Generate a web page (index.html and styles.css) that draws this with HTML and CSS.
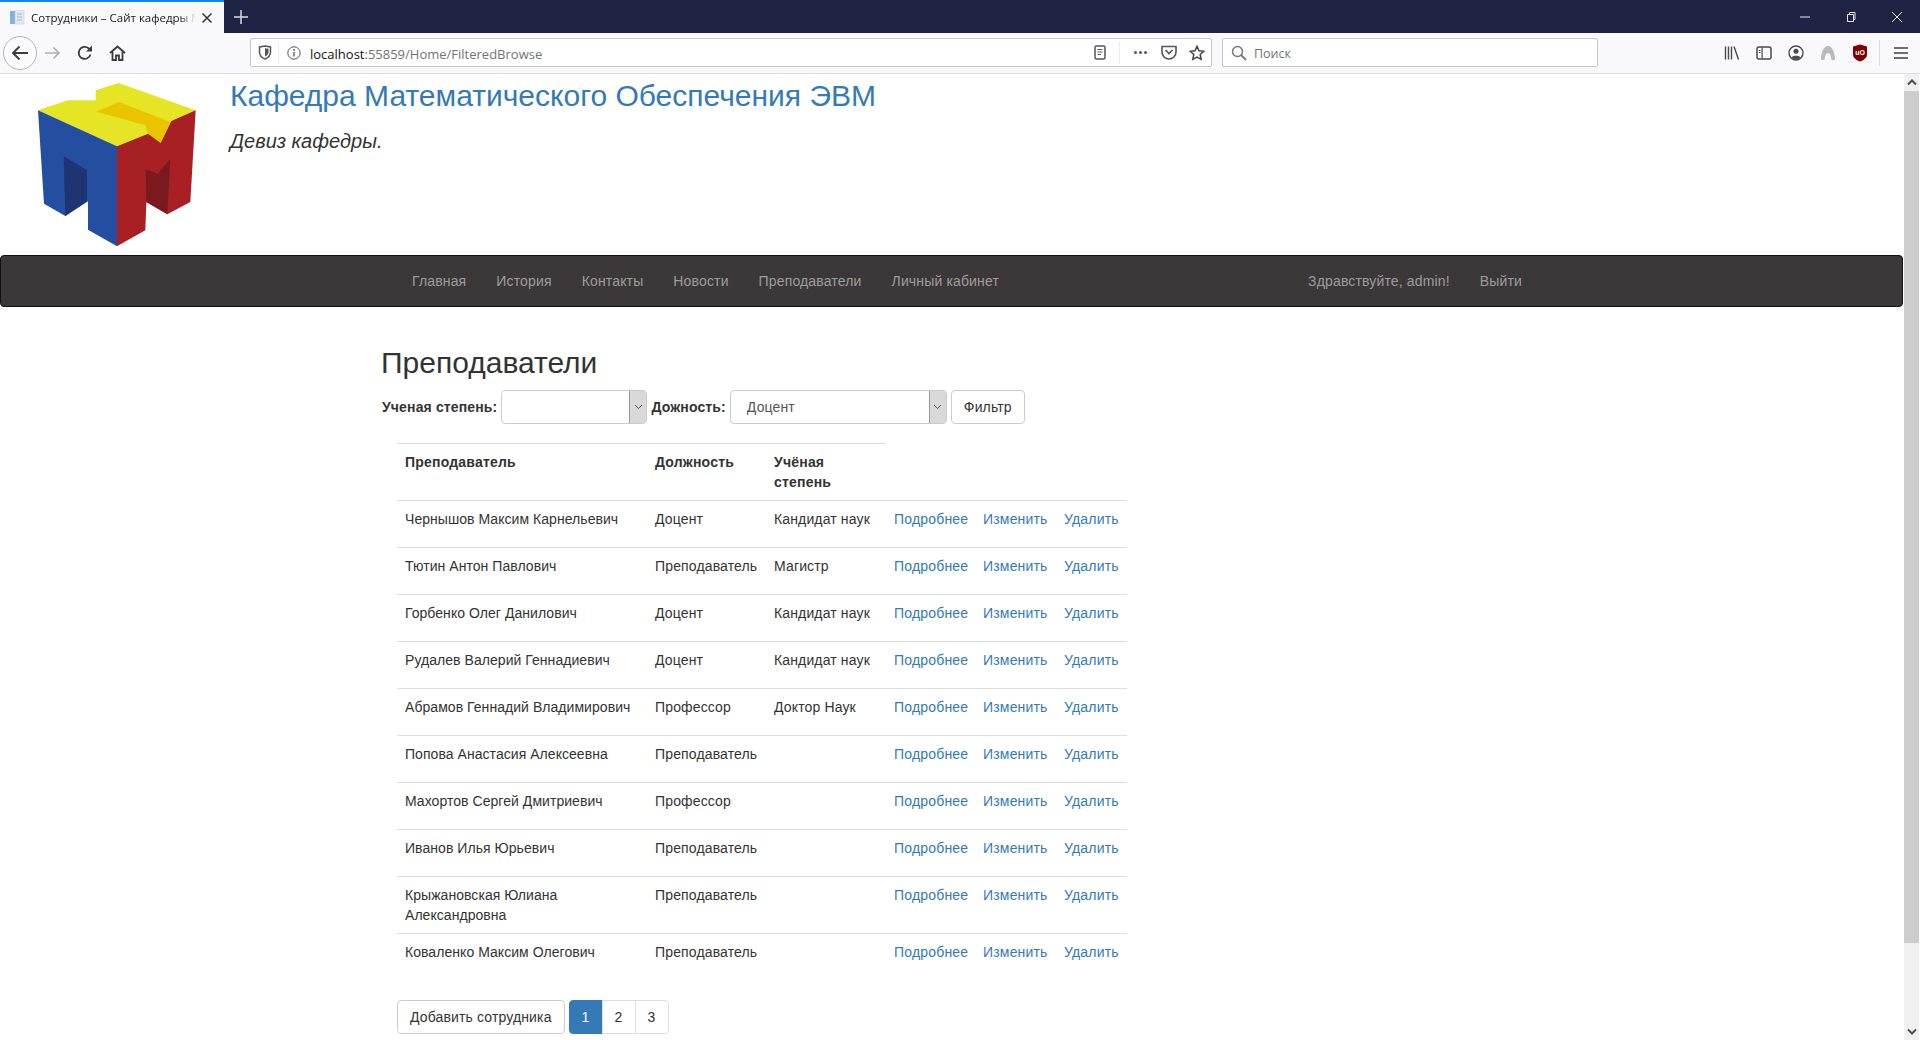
FILE: index.html
```html
<!DOCTYPE html>
<html lang="ru">
<head>
<meta charset="utf-8">
<title>Сотрудники – Сайт кафедры МО ЭВМ</title>
<link rel="stylesheet" href="styles.css">
</head>
<body>
<div class="tabbar">
  <div class="tab">
    <svg class="favicon" width="15" height="15" viewBox="0 0 15 15"><rect x="0" y="1" width="5" height="13" fill="#7fb2dc"/><rect x="5" y="0" width="9" height="14" fill="#e4e8ee" stroke="#c3cbd6" stroke-width=".6"/><path d="M7 4h5M7 7h5M7 10h5" stroke="#aab4c2" stroke-width="1"/></svg>
    <span class="tab-title">Сотрудники – Сайт кафедры М</span>
    <svg class="tab-close" width="12" height="12" viewBox="0 0 12 12"><path d="M1.500 1.500l9 9M10.500 1.500l-9 9" stroke="#33343a" stroke-width="1.500" fill="none"/></svg>
  </div>
  <svg class="newtab" width="14" height="14" viewBox="0 0 14 14"><path d="M7 0v14M0 7h14" stroke="#d8dae2" stroke-width="1.500"/></svg>
  <div class="winctl">
    <svg width="12" height="12" viewBox="0 0 12 12"><path d="M1 6h10" stroke="#e8e9ee" stroke-width="1"/></svg>
    <svg width="12" height="12" viewBox="0 0 12 12"><path d="M2.500 3.500h6v7h-6zM4.500 3.500V1.500h5.500v7H8.500" stroke="#e8e9ee" stroke-width="1" fill="none"/></svg>
    <svg width="12" height="12" viewBox="0 0 12 12"><path d="M1 1l10 10M11 1L1 11" stroke="#e8e9ee" stroke-width="1" fill="none"/></svg>
  </div>
</div>
<div class="toolbar">
  <div class="nav-btns">
    <div class="back"><svg width="18" height="18" viewBox="0 0 18 18"><path d="M17 9H2M8.500 2.500L2 9l6.500 6.500" stroke="#3b3b40" stroke-width="1.900" fill="none"/></svg></div>
    <svg class="ic-fwd" width="16" height="16" viewBox="0 0 16 16"><path d="M0 8h14M8.500 2.500L14 8l-5.500 5.500" stroke="#aeaeb2" stroke-width="1.600" fill="none"/></svg>
    <svg class="ic-reload" width="16" height="16" viewBox="0 0 16 16"><path d="M13.500 9.500A6 6 0 1 1 11.500 3.200L14 5" stroke="#3b3b40" stroke-width="1.800" fill="none"/><path d="M15 0.500V6.500H9z" fill="#3b3b40"/></svg>
    <svg class="ic-home" width="17" height="16" viewBox="0 0 17 16"><path d="M1 8l7.500-6.500L16 8M3.500 6.500V15h3.500v-4.500h3V15h3.500V6.500" stroke="#3b3b40" stroke-width="1.800" fill="none"/></svg>
  </div>
  <div class="urlbar">
    <svg class="ic-shield" width="14" height="15" viewBox="0 0 14 15"><path d="M1.500 2l5.500-1 5.500 1v5c0 3.500-2.500 5.800-5.500 7-3-1.200-5.500-3.500-5.500-7z" stroke="#55555a" stroke-width="1.500" fill="none"/><path d="M7 3.200l3.500 .6v3.200c0 2-1.500 3.500-3.500 4.500z" fill="#55555a"/></svg>
    <span class="url-sep"></span>
    <svg class="ic-info" width="14" height="14" viewBox="0 0 14 14"><circle cx="7" cy="7" r="6.200" stroke="#55555a" stroke-width="1" fill="none"/><path d="M7 6v4.500" stroke="#55555a" stroke-width="1.300"/><circle cx="7" cy="3.900" r=".9" fill="#55555a"/></svg>
    <span class="url-text"><span class="url-host">localhost</span>:55859/Home/FilteredBrowse</span>
    <svg class="ic-reader" width="12" height="15" viewBox="0 0 12 15"><rect x="1" y="1" width="10" height="13" rx="1.500" stroke="#55555a" stroke-width="1.500" fill="none"/><path d="M3.500 4.500h5M3.500 7h5M3.500 9.500h3.500" stroke="#55555a" stroke-width="1"/></svg>
    <span class="url-sep url-sep-right"></span>
    <span class="ic-dots"><i></i><i></i><i></i></span>
    <svg class="ic-pocket" width="16" height="15" viewBox="0 0 16 15"><path d="M1 1.500h14v5.500a7 7 0 0 1-14 0z" stroke="#55555a" stroke-width="1.600" fill="none"/><path d="M4.500 5l3.500 3.500L11.500 5" stroke="#55555a" stroke-width="1.700" fill="none"/></svg>
    <svg class="ic-star" width="16" height="16" viewBox="0 0 16 16"><path d="M8 1.300l2 4.500 4.800.5-3.600 3.200 1 4.800L8 12l-4.200 2.300 1-4.800L1.200 6.300 6 5.800z" stroke="#45454a" stroke-width="1.500" fill="none"/></svg>
  </div>
  <div class="searchbar">
    <svg width="16" height="16" viewBox="0 0 16 16"><circle cx="6.500" cy="6.500" r="5" stroke="#77777c" stroke-width="1.500" fill="none"/><path d="M10 10l5 5" stroke="#77777c" stroke-width="1.800"/></svg>
    <span>Поиск</span>
  </div>
  <div class="tools">
    <svg width="16" height="16" viewBox="0 0 16 16"><path d="M1.500 1.500v13M4.500 1.500v13M7.500 1.500v13M10 1.500l4.500 13" stroke="#4a4a4f" stroke-width="1.400" fill="none"/></svg>
    <svg width="16" height="16" viewBox="0 0 16 16"><rect x="1" y="2" width="14" height="12" rx="2" stroke="#4a4a4f" stroke-width="1.500" fill="none"/><rect x="5.500" y="2.500" width="1.200" height="11" fill="#4a4a4f"/><path d="M2.800 5.500h1.700M2.800 7.500h1.700" stroke="#4a4a4f" stroke-width="1"/></svg>
    <svg width="16" height="16" viewBox="0 0 16 16"><circle cx="8" cy="8" r="7" stroke="#4a4a4f" stroke-width="1.400" fill="none"/><circle cx="8" cy="6.200" r="2.500" fill="#4a4a4f"/><path d="M3.500 12.500c1-2.500 8-2.500 9 0a6 6 0 0 1-9 0z" fill="#4a4a4f"/></svg>
    <svg width="16" height="16" viewBox="0 0 16 16"><path d="M1 15C1 7 4 1 8 1s7 6 7 14h-3.500C11 11 10 8 8 8s-3 3-3.500 7z" fill="#b9babd"/></svg>
    <svg width="16" height="18" viewBox="0 0 16 18"><path d="M1 2.500L8 .5l7 2v8c0 3.500-3.500 5.800-7 7-3.500-1.200-7-3.500-7-7z" fill="#800000"/><text class="ublock" x="8" y="10.500" text-anchor="middle">uO</text></svg>
    <span class="tools-sep"></span>
    <svg class="ic-menu" width="14" height="12" viewBox="0 0 14 12"><path d="M0 1h14M0 6h14M0 11h14" stroke="#3f3f44" stroke-width="1.500"/></svg>
  </div>
</div>
<div class="viewport">
  <main class="page">
    <header class="site-head">
      <svg class="logo" width="160" height="165" viewBox="115 38 480 495">
        <polygon fill="#e5e525" points="115,120 205,90 288,90 288,60 357,38 588,120 515,152 483,218 445,190 352,228"/>
        <polygon fill="#ebc400" points="290,124 358,95 512,155 483,218 445,190 437,165"/>
        <polygon fill="#244ea0" points="115,120 352,228 352,528 265,478 265,393 197,437 133,400"/>
        <polygon fill="#1f3472" points="192,258 262,300 262,393 197,437"/>
        <polygon fill="#a82024" points="352,228 445,190 483,218 515,152 588,120 572,395 503,432 440,395 437,480 352,528"/>
        <polygon fill="#7a1a1f" points="438,297 475,310 512,265 503,432 440,395"/>
      </svg>
      <div class="site-titles">
        <h1 class="site-title">Кафедра Математического Обеспечения ЭВМ</h1>
        <p class="site-motto">Девиз кафедры.</p>
      </div>
    </header>
    <nav class="navbar">
      <ul class="nav-list">
        <li><a href="#">Главная</a></li>
        <li><a href="#">История</a></li>
        <li><a href="#">Контакты</a></li>
        <li><a href="#">Новости</a></li>
        <li><a href="#">Преподаватели</a></li>
        <li><a href="#">Личный кабинет</a></li>
      </ul>
      <ul class="nav-list">
        <li><a href="#">Здравствуйте, admin!</a></li>
        <li><a href="#">Выйти</a></li>
      </ul>
    </nav>
    <section class="content">
      <h2 class="page-title">Преподаватели</h2>
      <form class="filter">
        <label class="filter-label">Ученая степень:</label>
        <div class="select select-degree"><select><option></option></select><span class="select-arrow"><svg width="9" height="6" viewBox="0 0 9 6"><path d="M1 1l3.500 3.500L8 1" stroke="#555" stroke-width="1" fill="none"/></svg></span></div>
        <label class="filter-label">Дожность:</label>
        <div class="select select-post"><select><option>Доцент</option></select><span class="select-arrow"><svg width="9" height="6" viewBox="0 0 9 6"><path d="M1 1l3.500 3.500L8 1" stroke="#555" stroke-width="1" fill="none"/></svg></span></div>
        <button type="button" class="btn">Фильтр</button>
      </form>
      <table class="staff">
        <colgroup>
          <col class="c-name"><col class="c-post"><col class="c-degree"><col class="c-a1"><col class="c-a2"><col class="c-a3">
        </colgroup>
        <thead>
          <tr><th>Преподаватель</th><th>Должность</th><th>Учёная степень</th><th class="blank"></th><th class="blank"></th><th class="blank"></th></tr>
        </thead>
        <tbody>
          <tr><td>Чернышов Максим Карнельевич</td><td>Доцент</td><td>Кандидат наук</td><td><p class="act"><a href="#">Подробнее</a></p></td><td><p class="act"><a href="#">Изменить</a></p></td><td><p class="act"><a href="#">Удалить</a></p></td></tr>
          <tr><td>Тютин Антон Павлович</td><td>Преподаватель</td><td>Магистр</td><td><p class="act"><a href="#">Подробнее</a></p></td><td><p class="act"><a href="#">Изменить</a></p></td><td><p class="act"><a href="#">Удалить</a></p></td></tr>
          <tr><td>Горбенко Олег Данилович</td><td>Доцент</td><td>Кандидат наук</td><td><p class="act"><a href="#">Подробнее</a></p></td><td><p class="act"><a href="#">Изменить</a></p></td><td><p class="act"><a href="#">Удалить</a></p></td></tr>
          <tr><td>Рудалев Валерий Геннадиевич</td><td>Доцент</td><td>Кандидат наук</td><td><p class="act"><a href="#">Подробнее</a></p></td><td><p class="act"><a href="#">Изменить</a></p></td><td><p class="act"><a href="#">Удалить</a></p></td></tr>
          <tr><td>Абрамов Геннадий Владимирович</td><td>Профессор</td><td>Доктор Наук</td><td><p class="act"><a href="#">Подробнее</a></p></td><td><p class="act"><a href="#">Изменить</a></p></td><td><p class="act"><a href="#">Удалить</a></p></td></tr>
          <tr><td>Попова Анастасия Алексеевна</td><td>Преподаватель</td><td></td><td><p class="act"><a href="#">Подробнее</a></p></td><td><p class="act"><a href="#">Изменить</a></p></td><td><p class="act"><a href="#">Удалить</a></p></td></tr>
          <tr><td>Махортов Сергей Дмитриевич</td><td>Профессор</td><td></td><td><p class="act"><a href="#">Подробнее</a></p></td><td><p class="act"><a href="#">Изменить</a></p></td><td><p class="act"><a href="#">Удалить</a></p></td></tr>
          <tr><td>Иванов Илья Юрьевич</td><td>Преподаватель</td><td></td><td><p class="act"><a href="#">Подробнее</a></p></td><td><p class="act"><a href="#">Изменить</a></p></td><td><p class="act"><a href="#">Удалить</a></p></td></tr>
          <tr><td>Крыжановская Юлиана Александровна</td><td>Преподаватель</td><td></td><td><p class="act"><a href="#">Подробнее</a></p></td><td><p class="act"><a href="#">Изменить</a></p></td><td><p class="act"><a href="#">Удалить</a></p></td></tr>
          <tr><td>Коваленко Максим Олегович</td><td>Преподаватель</td><td></td><td><p class="act"><a href="#">Подробнее</a></p></td><td><p class="act"><a href="#">Изменить</a></p></td><td><p class="act"><a href="#">Удалить</a></p></td></tr>
        </tbody>
      </table>
      <div class="table-foot">
        <button type="button" class="btn">Добавить сотрудника</button>
        <ul class="pager">
          <li class="active"><a href="#">1</a></li>
          <li><a href="#">2</a></li>
          <li><a href="#">3</a></li>
        </ul>
      </div>
    </section>
  </main>
  <div class="scrollbar">
    <span class="sb-arrow"><svg width="10" height="7" viewBox="0 0 10 7"><path d="M1 5.500l4-4 4 4" stroke="#505050" stroke-width="2" fill="none"/></svg></span>
    <span class="sb-thumb"></span>
    <span class="sb-arrow sb-arrow-end"><svg width="10" height="7" viewBox="0 0 10 7"><path d="M1 1.500l4 4 4-4" stroke="#505050" stroke-width="2" fill="none"/></svg></span>
  </div>
</div>
</body>
</html>
```
FILE: styles.css
```css
* { box-sizing: border-box; }
html, body { margin: 0; height: 1040px; overflow: hidden; background: #fff; }
body { display: flex; flex-direction: column; font-family: "Liberation Sans", Arial, sans-serif; font-size: 14px; line-height: 20px; color: #333; }
a { color: inherit; text-decoration: none; }
ul { list-style: none; margin: 0; padding: 0; }

.tabbar { height: 33px; flex: none; background: #1f2444; display: flex; align-items: center; }
.tab { width: 224px; height: 33px; background: #f9f9fb; border-top: 2px solid #0a84ff; display: flex; align-items: center; padding-left: 10px; font-family: "Open Sans", sans-serif; font-size: 11.500px; color: #18181a; }
.favicon { flex: none; margin-right: 6px; }
.tab-title { width: 165px; white-space: nowrap; -webkit-mask-image: linear-gradient(to right, #000 90%, transparent); mask-image: linear-gradient(to right, #000 90%, transparent); }
.tab-close { margin-left: 5px; flex: none; }
.newtab { margin-left: 10px; }
.winctl { margin-left: auto; display: flex; gap: 34px; padding-right: 17px; }

.toolbar { height: 41px; flex: none; background: #f9f9fb; border-bottom: 1px solid #dcdcde; display: flex; align-items: center; padding-bottom: 1px; }
.nav-btns { width: 250px; flex: none; display: flex; align-items: center; padding-left: 3px; }
.back { width: 34px; height: 34px; border: 1px solid #b4b4b6; border-radius: 50%; display: flex; align-items: center; justify-content: center; background: #fbfbfc; }
.ic-fwd { margin-left: 8px; }
.ic-reload { margin-left: 16px; }
.ic-home { margin-left: 16px; }
.urlbar { width: 962px; height: 29px; flex: none; background: #fff; border: 1px solid #c8c8cc; border-radius: 2px; display: flex; align-items: center; padding: 2px 0 0 7px; font-family: "Open Sans", sans-serif; font-size: 13px; color: #737373; }
.url-sep { width: 1px; height: 22px; background: #ececee; margin-left: 6px; margin-top: -2px; }
.urlbar svg { margin-top: -2px; }
.ic-info { margin-left: 8px; }
.url-text { margin-left: 9px; }
.url-host { color: #111; }
.ic-reader { margin-left: auto; }
.url-sep-right { margin-left: 13px; }
.ic-dots { display: flex; gap: 1.500px; margin-left: 14px; margin-top: -2px; }
.ic-dots i { width: 3.500px; height: 3.500px; border-radius: 50%; background: #55555a; }
.ic-pocket { margin-left: 14px; }
.ic-star { margin-left: 12px; margin-right: 6px; }
.searchbar { width: 376px; height: 29px; flex: none; margin-left: 10px; background: #fff; border: 1px solid #c8c8cc; border-radius: 2px; display: flex; align-items: center; gap: 7px; padding: 0 0 0 8px; font-family: "Open Sans", sans-serif; font-size: 12.500px; color: #737373; }
.searchbar span { padding-top: 2px; }
.tools { flex: 1; display: flex; align-items: center; justify-content: flex-end; gap: 16px; padding-right: 12px; }
.tools-sep { width: 1px; height: 26px; background: #dcdcde; margin-left: -5px; margin-right: -2px; }
.ic-menu { flex: none; }
.ublock { font-size: 7px; font-weight: bold; fill: #fff; font-family: "Liberation Sans", sans-serif; }

.viewport { flex: 1; display: flex; min-height: 0; }
.page { flex: 1; min-width: 0; overflow: hidden; }
.scrollbar { width: 15px; margin-right: 1px; flex: none; background: #f0f0f0; display: flex; flex-direction: column; }
.sb-arrow { height: 17px; flex: none; display: flex; align-items: center; justify-content: center; }
.sb-thumb { height: 852px; flex: none; background: #cdcdcd; }
.sb-arrow-end { margin-top: auto; }

.site-head { height: 181px; display: flex; padding: 9px 0 0 38px; }
.logo { flex: none; }
.site-titles { margin-left: 32px; margin-top: -4px; }
.site-title { margin: 0; font-size: 30px; line-height: 33px; font-weight: 500; color: #337ab7; }
.site-motto { margin: 15px 0 0; font-size: 20px; line-height: 28px; font-style: italic; }

.navbar { height: 52px; margin-right: 1px; background: #3c3739; border: 1px solid #111; border-radius: 4px; display: flex; justify-content: space-between; padding: 0 365px 0 396px; letter-spacing: .15px; }
.nav-list { display: flex; }
.nav-list a { display: block; padding: 15px; color: #9d9d9d; }

.content { padding: 39px 0 0 382px; letter-spacing: .14px; }
.page-title { margin: 0 0 11px -1px; font-size: 30px; line-height: 33px; font-weight: 500; letter-spacing: 0; }
.filter { display: flex; align-items: center; height: 34px; }
.filter-label { font-weight: bold; margin-right: 4px; }
.select { height: 34px; display: flex; border: 1px solid #ccc; border-radius: 4px; background: #fff; margin-right: 4px; overflow: hidden; }
.select-degree { width: 146px; }
.select-post { width: 217px; }
.select select { flex: 1; min-width: 0; appearance: none; -webkit-appearance: none; border: 0; background: transparent; padding: 0 12px 0 16px; font: inherit; letter-spacing: inherit; color: #555; outline: 0; }
.select-arrow { width: 17px; flex: none; background: #d9d9d9; border-left: 1px solid #999; display: flex; align-items: center; justify-content: center; }
.btn { height: 34px; padding: 6px 12px; border: 1px solid #ccc; border-radius: 4px; background: #fff; font: inherit; letter-spacing: inherit; color: #333; }

.staff { width: 730px; margin: 19px 0 0 15px; border-collapse: collapse; table-layout: fixed; }
.c-name { width: 250px; }
.c-post { width: 119px; }
.c-degree { width: 120px; }
.c-a1 { width: 89px; }
.c-a2 { width: 81px; }
.c-a3 { width: 71px; }
.staff th { padding: 8px; border-top: 1px solid #ddd; border-bottom: 1px solid #ddd; text-align: left; vertical-align: top; font-weight: bold; letter-spacing: .2px; }
.staff th.blank { border-top: 0; }
.staff td { padding: 8px; border-top: 1px solid #ddd; vertical-align: top; }
.staff td:first-child { letter-spacing: .05px; }
.act { margin: 0 0 10px; color: #337ab7; letter-spacing: .18px; }

.table-foot { display: flex; gap: 4px; margin: 20px 0 0 15px; }
.pager { display: flex; }
.pager a { display: block; width: 34px; height: 34px; margin-left: -1px; border: 1px solid #ddd; text-align: center; line-height: 32px; color: #333; background: #fff; }
.pager li:first-child a { margin-left: 0; border-radius: 4px 0 0 4px; }
.pager li:last-child a { border-radius: 0 4px 4px 0; }
.pager .active a { background: #337ab7; border-color: #337ab7; color: #fff; }
```
